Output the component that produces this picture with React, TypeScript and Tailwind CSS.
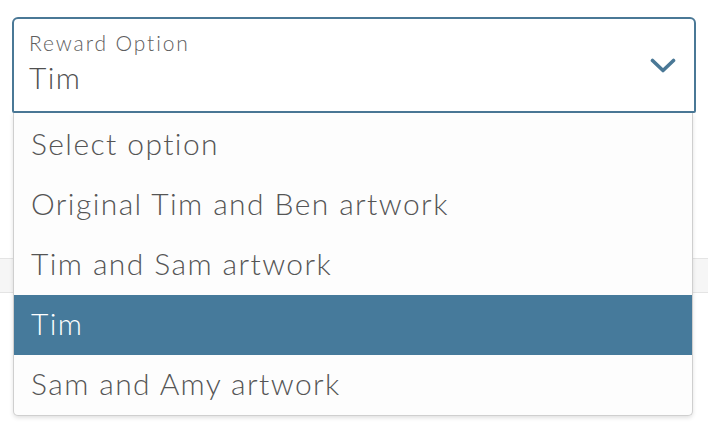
import { useState } from "react";

const opcoes = [
  "Select option",
  "Original Tim and Ben artwork",
  "Tim and Sam artwork",
  "Tim",
  "Sam and Amy artwork",
];

export default function App() {
  const [selecionado, setSelecionado] = useState("Tim");

  return (
    <div className="relative h-[423px] w-[708px] overflow-hidden bg-white font-['Lato','Noto_Sans',sans-serif] font-light text-[#555]">
      <div className="px-3 pt-[17px]">
        <div className="flex h-[96px] items-center justify-between rounded-t-[6px] rounded-b-[2px] border-2 border-[#4a7896] pl-[15px] pr-[18px]">
          <div className="mt-[-5px] flex flex-col">
            <span className="text-[21px] leading-[24px] tracking-[0.09em] text-[#5e5e5e]">Reward Option</span>
            <span className="mt-[5px] text-[30px] leading-[34px] tracking-[0.047em] text-[#505050]">{selecionado}</span>
          </div>
          <svg width="26" height="16" viewBox="0 0 26 16" fill="none" className="mt-[1px]">
            <path d="M2.5 2.5 L13 12.5 L23.5 2.5" stroke="#4a7896" strokeWidth="3.6" strokeLinecap="round" strokeLinejoin="round" />
          </svg>
        </div>
      </div>

      {/* conteudo atras do menu */}
      <div className="mt-[145px] h-[35px] border-y border-[#e4e4e4] bg-[#f6f6f6]"></div>

      <div className="absolute left-[13px] right-[15px] top-[113px] overflow-hidden rounded-b-[5px] border border-t-0 border-[#cfcfcf] bg-[#fdfdfd] pt-[2px] shadow-[0_2px_4px_rgba(0,0,0,0.12)]">
        {opcoes.map((op) => (
          <div
            key={op}
            onClick={() => setSelecionado(op)}
            className={
              op === selecionado
                ? "flex h-[60px] items-center bg-[#467a9b] pb-[3px] pl-[17px] text-[30px] tracking-[0.047em] text-white"
                : "flex h-[60px] items-center pb-[3px] pl-[17px] text-[30px] tracking-[0.047em] text-[#555]"
            }
          >
            {op}
          </div>
        ))}
      </div>
    </div>
  );
}
